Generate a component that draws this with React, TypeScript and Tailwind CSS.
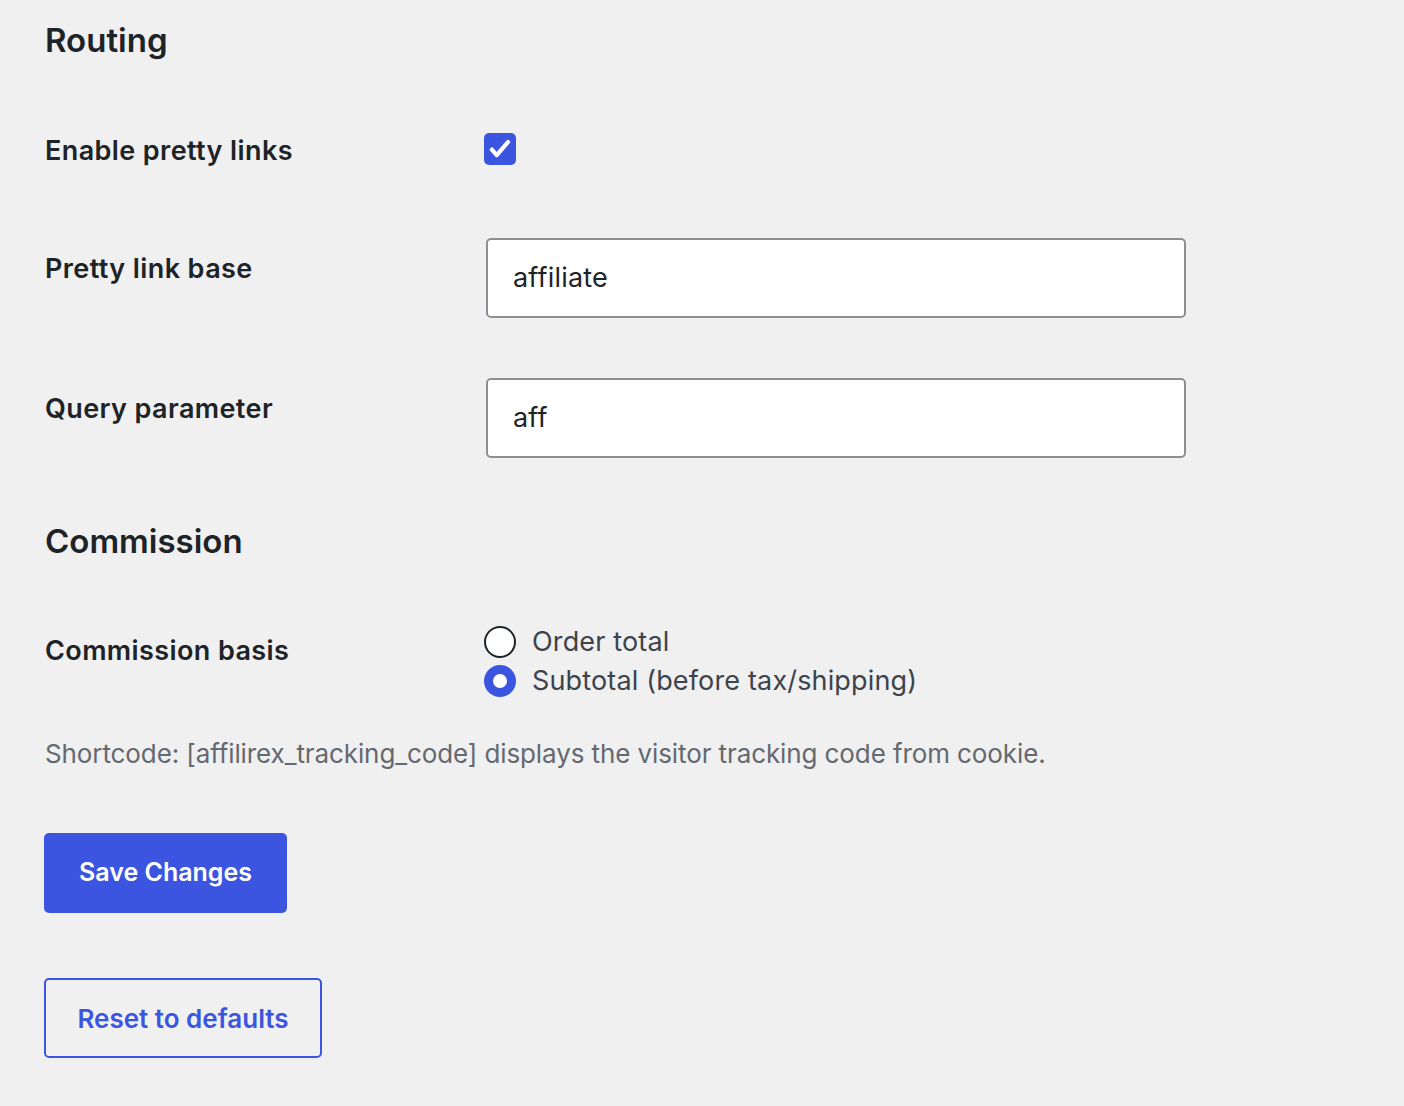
import React from "react";

const font = { fontFamily: "Inter, 'Noto Sans', 'Liberation Sans', sans-serif" };

function Label({ children }: { children: React.ReactNode }) {
  return <div className="w-[440px] shrink-0 text-[27px] font-semibold tracking-[0.4px] text-[#1d2327] leading-[36px]">{children}</div>;
}

export default function App() {
  return (
    <div className="min-h-[1106px] w-full bg-[#f0f0f1] pl-[45px] pt-[19px]" style={font}>
      <h2 className="text-[33px] font-semibold text-[#1d2327] leading-[42px]">Routing</h2>

      <div className="mt-[70px] flex items-center h-[40px]">
        <Label>Enable pretty links</Label>
        <div className="-ml-[1px] -mt-[4px] flex h-[32px] w-[32px] items-center justify-center rounded-[5px] bg-[#3c55e0]">
          <svg width="26" height="26" viewBox="0 0 24 24" fill="none">
            <path d="M4.5 12.5l4.5 5.2L19.5 5.5" stroke="white" strokeWidth="3.8" strokeLinecap="round" strokeLinejoin="round" />
          </svg>
        </div>
      </div>

      <div className="mt-[67px] flex items-start">
        <div className="pt-[13px]"><Label>Pretty link base</Label></div>
        <div className="ml-[1px] flex h-[80px] w-[700px] items-center rounded-[5px] border-2 border-[#8c8f94] bg-white px-[25px] text-[27px] tracking-[0.2px] text-[#1d2327]">affiliate</div>
      </div>

      <div className="mt-[60px] flex items-start">
        <div className="pt-[13px]"><Label>Query parameter</Label></div>
        <div className="ml-[1px] flex h-[80px] w-[700px] items-center rounded-[5px] border-2 border-[#8c8f94] bg-white px-[25px] text-[27px] tracking-[0.2px] text-[#1d2327]">aff</div>
      </div>

      <h2 className="mt-[62px] text-[33px] font-semibold text-[#1d2327] leading-[42px]">Commission</h2>

      <div className="mt-[64px] flex items-start">
        <div className="pt-[7px]"><Label>Commission basis</Label></div>
        <div className="-ml-[1px] flex flex-col gap-[7px]">
          <div className="flex items-center h-[32px]">
            <span className="h-[32px] w-[32px] rounded-full border-2 border-[#1d2327] bg-white" />
            <span className="ml-[16px] text-[27px] tracking-[0.15px] text-[#3c434a]">Order total</span>
          </div>
          <div className="flex items-center h-[32px]">
            <span className="flex h-[32px] w-[32px] items-center justify-center rounded-full bg-[#3c55e0]">
              <span className="h-[14px] w-[14px] rounded-full bg-white" />
            </span>
            <span className="ml-[16px] text-[27px] tracking-[0.15px] text-[#3c434a]">Subtotal (before tax/shipping)</span>
          </div>
        </div>
      </div>

      <p className="mt-[39px] text-[26px] leading-[36px] tracking-[-0.1px] text-[#646970]">Shortcode: [affilirex_tracking_code] displays the visitor tracking code from cookie.</p>

      <button className="-ml-[1px] mt-[61px] block h-[80px] w-[243px] rounded-[5px] bg-[#3c55e0] text-[25px] font-semibold text-white">Save Changes</button>

      <button className="-ml-[1px] mt-[65px] block h-[80px] w-[278px] rounded-[5px] border-2 border-[#3c55e0] bg-transparent text-[26px] font-semibold text-[#3c55e0]">Reset to defaults</button>
    </div>
  );
}
